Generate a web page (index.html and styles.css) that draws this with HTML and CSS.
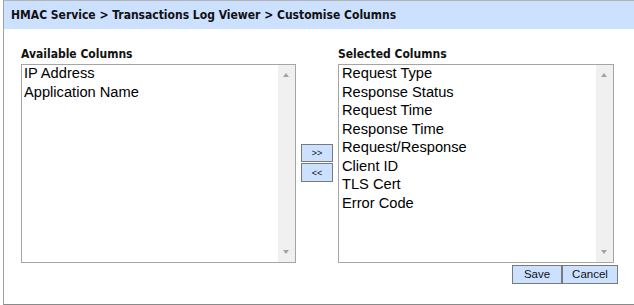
FILE: index.html
```html
<!DOCTYPE html>
<html lang="en">

<head>
    <meta charset="UTF-8">
    <title>Customise Columns</title>
    <link rel="stylesheet" href="styles.css">
</head>

<body>
    <div class="panel">
        <div class="panel-header">HMAC Service &gt; Transactions Log Viewer &gt; Customise Columns</div>
        <div class="panel-body">
            <div class="picker">
                <div class="column-box available">
                    <div class="column-title">Available Columns</div>
                    <div class="listbox">
                        <ul class="options">
                            <li>IP Address</li>
                            <li>Application Name</li>
                        </ul>
                        <div class="scrollbar"><span class="arrow up"></span><span class="arrow down"></span></div>
                    </div>
                </div>
                <div class="move-buttons">
                    <button class="btn move">&gt;&gt;</button>
                    <button class="btn move">&lt;&lt;</button>
                </div>
                <div class="column-box selected">
                    <div class="column-title">Selected Columns</div>
                    <div class="listbox">
                        <ul class="options">
                            <li>Request Type</li>
                            <li>Response Status</li>
                            <li>Request Time</li>
                            <li>Response Time</li>
                            <li>Request/Response</li>
                            <li>Client ID</li>
                            <li>TLS Cert</li>
                            <li>Error Code</li>
                        </ul>
                        <div class="scrollbar"><span class="arrow up"></span><span class="arrow down"></span></div>
                    </div>
                </div>
            </div>
            <div class="actions">
                <button class="btn action save">Save</button>
                <button class="btn action">Cancel</button>
            </div>
        </div>
    </div>
</body>

</html>
```

FILE: styles.css
```css
body {
    margin: 0;
    background: #fff;
    font-family: 'Liberation Sans', Arial, sans-serif;
    color: #111;
}

.panel {
    margin-left: 3px;
    height: 305px;
    box-sizing: border-box;
    border-left: 1px solid #a0a0a0;
    border-top: 1px solid #b4b4b4;
    border-bottom: 1px solid #8a8a8a;
    display: flex;
    flex-direction: column;
}

.panel-header {
    height: 28px;
    line-height: 28px;
    background: #cce0ff;
    padding-left: 7px;
    font-family: 'DejaVu Sans Condensed', 'DejaVu Sans', sans-serif;
    font-weight: bold;
    font-size: 12px;
    color: #111;
}

.panel-body {
    padding: 18px 0 0 17px;
}

.picker {
    display: flex;
    align-items: flex-end;
}

.column-title {
    font-family: 'DejaVu Sans Condensed', 'DejaVu Sans', sans-serif;
    font-weight: bold;
    font-size: 12px;
    line-height: 15px;
    margin-bottom: 2px;
}

.listbox {
    height: 199px;
    box-sizing: border-box;
    border: 1px solid #a5a5a5;
    display: flex;
}

.available .listbox {
    width: 275px;
}

.selected .listbox {
    width: 276px;
}

.options {
    list-style: none;
    margin: -1px 0 0 0;
    padding: 0 0 0 2px;
    flex: 1;
    font-size: 14.67px;
    line-height: 18.57px;
    color: #000;
}

.selected .options {
    padding-left: 3px;
}

.scrollbar {
    width: 17px;
    background: #f0f0f0;
    position: relative;
}

.arrow {
    position: absolute;
    left: 5px;
    width: 0;
    height: 0;
    border-left: 3.5px solid transparent;
    border-right: 3.5px solid transparent;
}

.arrow.up {
    top: 8px;
    border-bottom: 4px solid #a3a3a3;
}

.arrow.down {
    bottom: 8px;
    border-top: 4px solid #a3a3a3;
}

.move-buttons {
    display: flex;
    flex-direction: column;
    margin: 0 5px 81px 5px;
}

.btn {
    margin: 0;
    padding: 0;
    background: #cce0ff;
    border: 1px solid #7a7a7a;
    font-family: 'Liberation Sans', Arial, sans-serif;
    color: #111;
    box-sizing: border-box;
}

.btn.move {
    width: 32px;
    height: 18px;
    font-size: 9px;
    line-height: 16px;
}

.btn.move + .btn.move {
    margin-top: 1px;
    height: 19px;
}

.actions {
    display: flex;
    justify-content: flex-end;
    padding: 2px 16px 0 0;
}

.btn.action {
    height: 19px;
    font-size: 11.5px;
    line-height: 17px;
    width: 56px;
}

.btn.save {
    width: 50px;
}
```
